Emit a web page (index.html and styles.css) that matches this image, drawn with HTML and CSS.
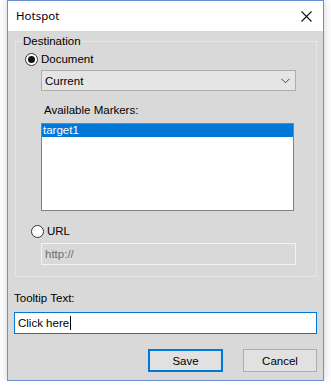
FILE: index.html
```html
<!DOCTYPE html>
<html>
<head>
<meta charset="utf-8">
<link rel="stylesheet" href="styles.css">
</head>
<body>
<div class="window">
  <div class="titlebar">
    <span class="title">Hotspot</span>
    <svg class="close" width="11" height="11" viewBox="0 0 11 11"><path d="M0.5 0.5 L10.5 10.5 M10.5 0.5 L0.5 10.5" stroke="#111" stroke-width="1.1" fill="none"/></svg>
  </div>
  <div class="content">
    <fieldset class="group">
      <legend>Destination</legend>
      <div class="radio-row doc">
        <span class="radio checked"></span>
        <span class="radio-label">Document</span>
      </div>
      <div class="combo">
        <span>Current</span>
        <svg width="9" height="6" viewBox="0 0 9 6"><path d="M0.5 0.8 L4.5 4.8 L8.5 0.8" stroke="#444" stroke-width="1" fill="none"/></svg>
      </div>
      <div class="label markers-label">Available Markers:</div>
      <div class="listbox">
        <div class="item selected">target1</div>
      </div>
      <div class="radio-row url">
        <span class="radio"></span>
        <span class="radio-label">URL</span>
      </div>
      <div class="textbox disabled">http://</div>
    </fieldset>
    <div class="label tooltip-label">Tooltip Text:</div>
    <div class="textbox focused">Click here<span class="caret"></span></div>
    <div class="buttons">
      <div class="btn default">Save</div>
      <div class="btn">Cancel</div>
    </div>
  </div>
</div>
</body>
</html>
```
FILE: styles.css
```css
html, body {
  margin: 0;
  padding: 0;
  background: #ffffff;
}
body {
  font-family: "Liberation Sans", Arial, sans-serif;
  font-size: 11px;
  color: #000;
}
.window {
  margin-left: 7px;
  width: 315px;
  height: 379px;
  border: 1px solid #6d8ed3;
  background: #d9d9d9;
  box-shadow: 0 0 9px rgba(0,0,0,0.18);
  display: flex;
  flex-direction: column;
}
.titlebar {
  height: 30px;
  background: #ffffff;
  display: flex;
  align-items: center;
  justify-content: space-between;
  padding-left: 8px;
  padding-right: 11px;
}
.title {
  font-family: "Noto Sans", "Open Sans", sans-serif;
  font-size: 11.5px;
  color: #000;
  margin-top: -1px;
}
.close {
  display: block;
  margin-top: 1px;
}
.content {
  display: flex;
  flex-direction: column;
}
.group {
  margin: 4px 6px 0 7px;
  padding: 0 0 11px 0;
  border: 1px solid #e6e6e6;
  min-width: 0;
  display: flex;
  flex-direction: column;
  align-items: flex-start;
}
.group legend {
  margin-left: 6px;
  padding: 0 1px;
  line-height: 13px;
  height: 13px;
  font-size: 11.5px;
}
.radio-row {
  display: flex;
  align-items: center;
  height: 13px;
}
.radio-row.doc {
  margin-top: 5px;
  margin-left: 9px;
}
.radio-row.url {
  margin-top: 14px;
  margin-left: 15px;
}
.radio {
  box-sizing: border-box;
  width: 13px;
  height: 13px;
  border: 1px solid #333;
  border-radius: 50%;
  background: #fff;
  display: flex;
  align-items: center;
  justify-content: center;
}
.radio.checked::after {
  content: "";
  width: 7px;
  height: 7px;
  border-radius: 50%;
  background: #111;
}
.radio-label {
  margin-left: 3px;
  line-height: 13px;
  font-size: 11.5px;
}
.combo {
  box-sizing: border-box;
  margin-top: 4px;
  margin-left: 25px;
  width: 255px;
  height: 21px;
  border: 1px solid #adadad;
  background: #e5e5e5;
  display: flex;
  align-items: center;
  justify-content: space-between;
  padding: 0 5px 0 3px;
  font-size: 11.5px;
}
.combo svg {
  display: block;
}
.label {
  line-height: 13px;
  height: 13px;
  font-size: 11.5px;
}
.markers-label {
  margin-top: 13px;
  margin-left: 28px;
}
.listbox {
  box-sizing: border-box;
  margin-top: 6px;
  margin-left: 25px;
  width: 253px;
  height: 88px;
  border: 1px solid #828282;
  background: #fff;
}
.item {
  height: 13px;
  line-height: 13px;
  padding-left: 1px;
  font-size: 11.5px;
}
.item.selected {
  background: #0078d7;
  color: #fff;
}
.textbox {
  box-sizing: border-box;
  height: 22px;
  display: flex;
  align-items: center;
  padding-left: 3px;
  font-size: 11.5px;
}
.textbox.disabled {
  margin-top: 5px;
  margin-left: 25px;
  width: 255px;
  border: 1px solid #f3f3f3;
  background: #d9d9d9;
  color: #6d6d6d;
}
.tooltip-label {
  margin-top: 15px;
  margin-left: 6px;
}
.textbox.focused {
  margin-top: 7px;
  margin-left: 6px;
  width: 303px;
  border: 1px solid #0078d7;
  background: #fff;
  color: #000;
}
.caret {
  display: inline-block;
  width: 0;
  height: 14px;
  border-left: 1px solid #000;
  margin-left: 1px;
}
.buttons {
  margin-top: 15px;
  margin-right: 6px;
  display: flex;
  justify-content: flex-end;
  gap: 20px;
}
.btn {
  box-sizing: border-box;
  width: 74px;
  height: 23px;
  border: 1px solid #adadad;
  background: #e1e1e1;
  display: flex;
  align-items: center;
  justify-content: center;
  font-size: 11.5px;
}
.btn.default {
  width: 75px;
  border: 2px solid #0078d7;
}
```
